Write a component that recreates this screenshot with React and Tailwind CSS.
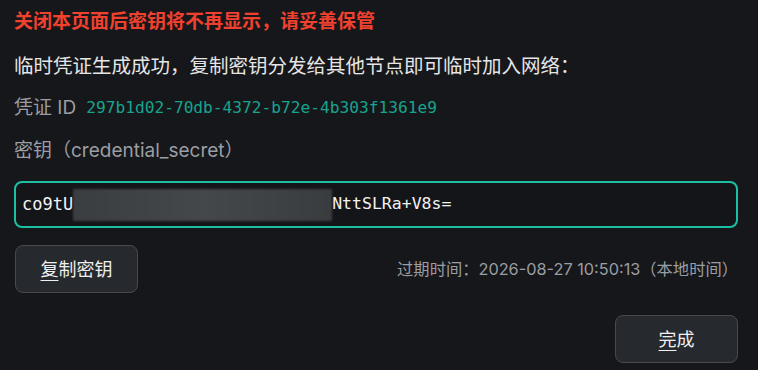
export default function App() {
  const sans = { fontFamily: '"Inter", "Noto Sans CJK SC", sans-serif' };
  return (
    <div className="w-[758px] h-[370px] bg-[#16171a] pl-[14px] pr-[20px] pt-[8px] flex flex-col" style={sans}>
      <div className="text-[19px] leading-[28px] font-bold text-[#f0412f]">
        关闭本页面后密钥将不再显示，请妥善保管
      </div>
      <div className="mt-[16px] text-[19.5px] leading-[28px] text-[#e6e6e6]">
        临时凭证生成成功，复制密钥分发给其他节点即可临时加入网络：
      </div>
      <div className="mt-[14px] flex items-center text-[19px] leading-[28px] text-[#9b9ea4]">
        <span>凭证 ID</span>
        <span className="ml-[10px] text-[16.2px] text-[#17a38e] font-['DejaVu_Sans_Mono',monospace]">
          297b1d02-70db-4372-b72e-4b303f1361e9
        </span>
      </div>
      <div className="mt-[15px] text-[19px] leading-[28px] text-[#9b9ea4]">
        密钥（credential_secret）
      </div>
      <div className="mt-[16px] h-[47px] rounded-[8px] border-[2px] border-[#1bbfa3] bg-[#141518] flex items-center pl-[6px]">
        <span className="text-[17px] text-[#f2f2f2] font-['DejaVu_Sans_Mono',monospace]">co9tU</span>
        <span className="w-[259px] h-[32px] bg-gradient-to-r from-[#3b3e40] via-[#45484a] to-[#3a3d3f] blur-[1px]" />
        <span className="text-[16.5px] text-[#f2f2f2] font-['DejaVu_Sans_Mono',monospace]">NttSLRa+V8s=</span>
      </div>
      <div className="mt-[17px] flex items-center justify-between">
        <button className="w-[123px] h-[48px] ml-[1px] rounded-[8px] border-[1.5px] border-[#46494e] bg-[#26292e] text-[18px] text-[#f0f0f0]">
          <span className="underline underline-offset-[4px]">复</span>制密钥
        </button>
        <div className="text-[16.3px] text-[#9a9da3]">
          过期时间：2026-08-27 10:50:13（本地时间）
        </div>
      </div>
      <div className="mt-[22px] flex justify-end">
        <button className="w-[123px] h-[48px] rounded-[8px] border-[1.5px] border-[#46494e] bg-[#26292e] text-[18px] text-[#f0f0f0]">
          <span className="underline underline-offset-[4px]">完</span>成
        </button>
      </div>
    </div>
  );
}
